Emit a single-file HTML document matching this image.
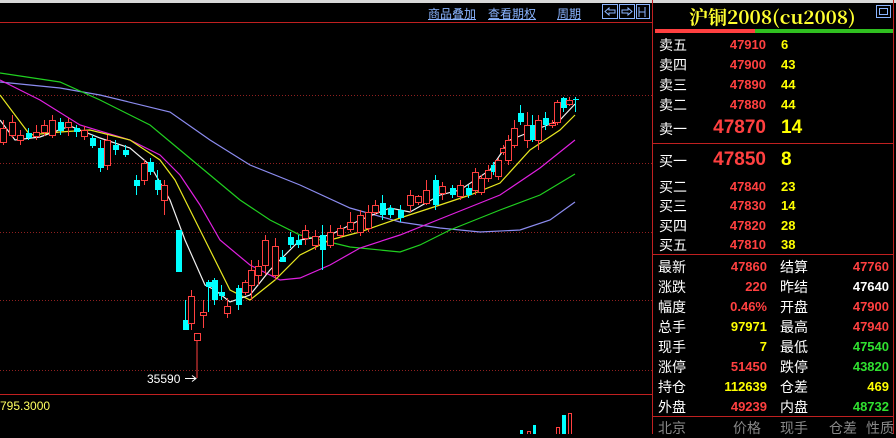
<!DOCTYPE html>
<html><head><meta charset="utf-8"><style>
body{margin:0;width:896px;height:434px;background:#000;overflow:hidden;position:relative;font-family:"Liberation Sans","Noto Sans CJK SC",sans-serif}
.a{position:absolute;white-space:nowrap}
.cn{font-family:"Noto Sans CJK SC",sans-serif;color:#fff;font-size:14px}
.n{font-family:"Liberation Sans",sans-serif;font-weight:bold;font-size:13px;text-align:right}
.r{color:#ff4040}.y{color:#ffff00}.g{color:#30e030}.w{color:#fff}
.lnk{color:#8ab4ff;text-decoration:underline;font-size:12px;font-family:"Noto Sans CJK SC",sans-serif}
</style></head><body>
<div class="a" style="left:0;top:0;width:896px;height:3px;background:#d8d8d8"></div>
<svg class="a" style="left:0;top:0" width="652" height="434">
<line x1="0" y1="22.5" x2="652" y2="22.5" stroke="#c02020"/>
<g stroke="#902020" stroke-dasharray="1,2">
<line x1="0" y1="95.5" x2="652" y2="95.5"/><line x1="0" y1="163.5" x2="652" y2="163.5"/>
<line x1="0" y1="232.5" x2="652" y2="232.5"/><line x1="0" y1="300.5" x2="652" y2="300.5"/>
<line x1="0" y1="370.5" x2="652" y2="370.5"/></g>
<line x1="0" y1="394.5" x2="652" y2="394.5" stroke="#c02020"/>
<g fill="none" stroke-width="1.2">
<polyline stroke="#8c8cf0" points="0,82 60,88 100,95 170,112 210,140 250,165 300,185 350,208 400,222 440,228 480,232 520,230 550,220 575,202"/>
<polyline stroke="#20d020" points="0,73 60,82 100,100 150,125 180,150 210,175 240,200 270,220 300,235 350,247 400,252 420,245 450,230 500,210 540,195 575,174"/>
<polyline stroke="#e020e0" points="0,80 40,100 80,125 130,140 160,155 180,175 200,205 220,240 250,265 280,280 300,278 330,265 360,248 400,235 450,215 500,195 540,168 575,140"/>
<polyline stroke="#e8e820" points="0,95 30,135 60,132 90,130 130,140 160,160 175,180 190,210 210,250 230,290 250,300 275,280 300,255 330,240 360,232 400,218 440,205 470,195 500,183 530,150 560,130 575,115"/>
<polyline stroke="#f0f0f0" points="0,120 15,140 40,137 70,126 100,138 130,148 150,165 170,200 185,240 205,285 215,290 230,302 250,295 270,270 300,240 330,235 360,220 390,208 410,212 440,195 460,190 490,170 510,140 540,128 560,120 575,104"/>
</g>
<g id="c"></g>
<g stroke="#ff4040" fill="none">
<line x1="197" y1="340" x2="197" y2="378"/>
</g>
<path d="M185 378.5 H196 M192 375.5 L196 378.5 L192 381.5" stroke="#fff" fill="none"/>
<text x="147" y="383" fill="#fff" font-size="12" font-family="Liberation Sans">35590</text>
<text x="0" y="410" fill="#ffff60" font-size="12" font-family="Liberation Sans">795.3000</text>
<g fill="#00ffff"><rect x="520" y="430" width="3" height="4"/><rect x="533" y="425" width="3" height="9"/><rect x="562" y="415" width="4" height="19"/></g>
<g fill="none" stroke="#ff4040"><rect x="527.5" y="431.5" width="3" height="3"/><rect x="556.5" y="427.5" width="3" height="7"/><rect x="568.5" y="413.5" width="3" height="21"/></g>
</svg>
<script>
var d=[[3,128,142,120,145,1],[12,122,135,115,138,1],[20,135,140,130,145,1],[28,133,138,128,140,0],[36,132,136,125,140,1],[44,125,132,120,136,1],[52,120,135,115,138,1],[60,122,131,118,135,0],[68,122,127,118,136,1],[76,128,132,125,137,0],[84,130,136,126,140,1],[92,138,146,135,148,0],[100,148,168,140,172,0],[107,140,165,135,170,1],[115,145,150,140,155,0],[125,150,155,145,157,0],[136,180,186,175,195,0],[144,163,180,160,185,1],[150,162,172,158,175,0],[157,180,190,170,195,0],[164,185,200,180,215,1],[178,230,272,230,272,0],[185,320,330,300,330,0],[191,296,323,290,330,1],[197,333,340,333,340,1],[203,312,315,300,328,1],[208,282,287,280,312,0],[214,280,300,278,305,0],[221,292,296,285,300,0],[227,306,313,298,318,1],[238,288,305,285,310,0],[245,282,292,280,295,1],[251,270,285,260,300,1],[258,266,275,260,285,1],[265,240,265,235,275,1],[275,246,275,238,280,1],[282,257,262,250,260,0],[290,237,245,232,248,0],[298,240,245,235,248,0],[305,230,238,225,245,1],[315,236,245,230,250,1],[322,235,250,225,270,0],[330,232,245,225,248,1],[340,228,235,225,238,1],[350,222,229,212,232,1],[360,215,232,210,236,1],[368,212,228,205,232,1],[375,205,212,200,215,1],[382,203,215,195,220,0],[390,208,215,205,218,0],[400,210,218,205,222,0],[410,195,205,190,212,1],[418,196,202,195,205,1],[426,190,203,180,205,1],[435,180,205,175,210,0],[442,186,193,182,200,1],[452,188,195,185,198,0],[460,185,196,180,200,1],[468,188,195,185,198,0],[475,172,190,168,195,1],[481,178,192,175,195,1],[488,170,178,165,182,1],[493,165,172,162,175,0],[498,160,176,158,180,1],[503,148,152,145,155,1],[508,140,160,135,165,1],[514,128,145,120,148,1],[520,113,122,105,125,0],[527,125,140,112,148,1],[532,125,140,115,142,0],[538,120,140,115,150,1],[545,118,125,112,130,0],[552,123,125,120,128,1],[557,102,122,100,125,1],[563,98,108,97,112,0],[569,100,104,97,106,1],[575,99,100,97,112,0]];
var s='';d.forEach(function(a){var c=a[5]?'#ff4040':'#00ffff';s+='<line x1="'+(a[0]+.5)+'" y1="'+a[3]+'" x2="'+(a[0]+.5)+'" y2="'+a[4]+'" stroke="'+c+'"/>';s+=a[5]?'<rect x="'+(a[0]-2.5)+'" y="'+(a[1]+.5)+'" width="6" height="'+Math.max(1,a[2]-a[1])+'" fill="#000" stroke="'+c+'"/>':'<rect x="'+(a[0]-2)+'" y="'+a[1]+'" width="6" height="'+Math.max(1,a[2]-a[1])+'" fill="'+c+'"/>';});
document.getElementById('c').innerHTML=s;
</script>
<div class="a lnk" style="left:428px;top:5px">商品叠加</div>
<div class="a lnk" style="left:488px;top:5px">查看期权</div>
<div class="a lnk" style="left:557px;top:5px">周期</div>
<svg class="a" style="left:602px;top:4px" width="48" height="16" fill="none" stroke="#8ab4ff">
<rect x=".5" y=".5" width="15" height="14"/><rect x="17.5" y=".5" width="15" height="14"/><rect x="34.5" y=".5" width="13" height="14"/>
<path d="M3 7.5 L7 4 V6 H13 V9 H7 V11Z M30 7.5 L26 4 V6 H20 V9 H26 V11Z M37 3 V13 M37 8 H43 M43 3 V13"/></svg>
<div class="a" style="left:652px;top:0;width:1px;height:434px;background:#c02020"></div>
<div class="a" style="left:893px;top:0;width:1px;height:434px;background:#c02020"></div>
<div class="a" style="left:689px;top:3px;color:#ffff30;font-size:19px;font-weight:bold;font-family:'Noto Serif CJK SC',serif">沪铜2008(cu2008)</div>
<svg class="a" style="left:876px;top:5px" width="16" height="14" fill="none" stroke="#8ab4ff"><rect x=".5" y=".5" width="14" height="12"/><rect x="3.5" y="3.5" width="8" height="6"/></svg>
<div class="a" style="left:655px;top:29px;width:100px;height:4px;background:#ff4040"></div>
<div class="a" style="left:755px;top:29px;width:138px;height:4px;background:#30c020"></div>
<div class="a cn" style="left:659px;top:35px">卖五</div><div class="a n r" style="left:700px;width:66px;top:37px">47910</div><div class="a n y" style="left:781px;top:37px">6</div>
<div class="a cn" style="left:659px;top:55px">卖四</div><div class="a n r" style="left:700px;width:66px;top:57px">47900</div><div class="a n y" style="left:781px;top:57px">43</div>
<div class="a cn" style="left:659px;top:75px">卖三</div><div class="a n r" style="left:700px;width:66px;top:77px">47890</div><div class="a n y" style="left:781px;top:77px">44</div>
<div class="a cn" style="left:659px;top:95px">卖二</div><div class="a n r" style="left:700px;width:66px;top:97px">47880</div><div class="a n y" style="left:781px;top:97px">44</div>
<div class="a cn" style="left:659px;top:119px">卖一</div><div class="a n r" style="left:700px;width:66px;top:117px;font-size:19px">47870</div><div class="a n y" style="left:781px;top:117px;font-size:19px">14</div>
<div class="a" style="left:653px;top:143px;width:240px;height:1px;background:#c02020"></div>
<div class="a cn" style="left:659px;top:151px">买一</div><div class="a n r" style="left:700px;width:66px;top:149px;font-size:19px">47850</div><div class="a n y" style="left:781px;top:149px;font-size:19px">8</div>
<div class="a cn" style="left:659px;top:177px">买二</div><div class="a n r" style="left:700px;width:66px;top:179px">47840</div><div class="a n y" style="left:781px;top:179px">23</div>
<div class="a cn" style="left:659px;top:196px">买三</div><div class="a n r" style="left:700px;width:66px;top:198px">47830</div><div class="a n y" style="left:781px;top:198px">14</div>
<div class="a cn" style="left:659px;top:216px">买四</div><div class="a n r" style="left:700px;width:66px;top:218px">47820</div><div class="a n y" style="left:781px;top:218px">28</div>
<div class="a cn" style="left:659px;top:235px">买五</div><div class="a n r" style="left:700px;width:66px;top:237px">47810</div><div class="a n y" style="left:781px;top:237px">38</div>
<div class="a" style="left:653px;top:254px;width:240px;height:1px;background:#c02020"></div>
<div class="a cn" style="left:658px;top:257px">最新</div><div class="a n r" style="left:700px;width:67px;top:259px">47860</div><div class="a cn" style="left:780px;top:257px">结算</div><div class="a n r" style="left:820px;width:69px;top:259px">47760</div>
<div class="a cn" style="left:658px;top:277px">涨跌</div><div class="a n r" style="left:700px;width:67px;top:279px">220</div><div class="a cn" style="left:780px;top:277px">昨结</div><div class="a n w" style="left:820px;width:69px;top:279px">47640</div>
<div class="a cn" style="left:658px;top:297px">幅度</div><div class="a n r" style="left:700px;width:67px;top:299px">0.46%</div><div class="a cn" style="left:780px;top:297px">开盘</div><div class="a n r" style="left:820px;width:69px;top:299px">47900</div>
<div class="a cn" style="left:658px;top:317px">总手</div><div class="a n y" style="left:700px;width:67px;top:319px">97971</div><div class="a cn" style="left:780px;top:317px">最高</div><div class="a n r" style="left:820px;width:69px;top:319px">47940</div>
<div class="a cn" style="left:658px;top:337px">现手</div><div class="a n y" style="left:700px;width:67px;top:339px">7</div><div class="a cn" style="left:780px;top:337px">最低</div><div class="a n g" style="left:820px;width:69px;top:339px">47540</div>
<div class="a cn" style="left:658px;top:357px">涨停</div><div class="a n r" style="left:700px;width:67px;top:359px">51450</div><div class="a cn" style="left:780px;top:357px">跌停</div><div class="a n g" style="left:820px;width:69px;top:359px">43820</div>
<div class="a cn" style="left:658px;top:377px">持仓</div><div class="a n y" style="left:700px;width:67px;top:379px">112639</div><div class="a cn" style="left:780px;top:377px">仓差</div><div class="a n y" style="left:820px;width:69px;top:379px">469</div>
<div class="a cn" style="left:658px;top:397px">外盘</div><div class="a n r" style="left:700px;width:67px;top:399px">49239</div><div class="a cn" style="left:780px;top:397px">内盘</div><div class="a n g" style="left:820px;width:69px;top:399px">48732</div>
<div class="a" style="left:653px;top:416px;width:240px;height:1px;background:#c02020"></div>
<div class="a cn" style="left:658px;top:418px;color:#888">北京</div>
<div class="a cn" style="left:733px;top:418px;color:#888">价格</div>
<div class="a cn" style="left:780px;top:418px;color:#888">现手</div>
<div class="a cn" style="left:829px;top:418px;color:#888">仓差</div>
<div class="a cn" style="left:866px;top:418px;color:#888">性质</div>
</body></html>
